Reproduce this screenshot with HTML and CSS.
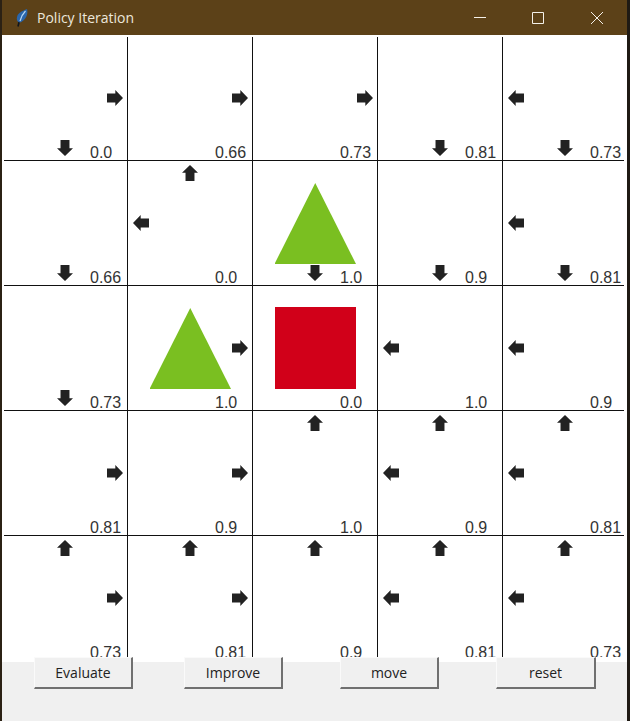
FILE: index.html
```html
<!DOCTYPE html>
<html lang="en">
<head>
    <meta charset="UTF-8">
    <title>Policy Iteration</title>
    <link rel="stylesheet" href="styles.css">
</head>
<body>
    <div class="titlebar">
        <svg class="feather" width="12" height="18" viewBox="0 0 12 18">
            <path d="M2 17.5 L3.2 12.5" stroke="#10161e" stroke-width="1.6" fill="none"/>
            <path d="M11 0 C12.5 5 9.5 11.5 4 13.5 C.5 13.5 0 9 1.8 5.8 C4 2.8 8 1 11 0 Z" fill="#2a66ab"/>
            <path d="M9.5 2 C7 4.5 5 8 4 12" stroke="#b5d8f4" stroke-width="1.2" fill="none"/>
        </svg>
        <span class="title">Policy Iteration</span>
        <div class="controls">
            <span class="control">
                <svg width="12" height="12" viewBox="0 0 12 12"><path d="M0 5.5H12" stroke="#f4f0e8" fill="none"/></svg>
            </span>
            <span class="control">
                <svg width="12" height="12" viewBox="0 0 12 12"><path d="M.5.5H11.5V11.5H.5Z" stroke="#f4f0e8" fill="none"/></svg>
            </span>
            <span class="control">
                <svg width="12" height="12" viewBox="0 0 12 12"><path d="M0 0L12 12M12 0L0 12" stroke="#f4f0e8" fill="none"/></svg>
            </span>
        </div>
    </div>

    <div class="canvas">
        <div class="board">
            <div class="row">
                <div class="cell"><span class="arrow right"></span><span class="arrow down"></span><span class="value">0.0</span></div>
                <div class="cell"><span class="arrow right"></span><span class="value">0.66</span></div>
                <div class="cell"><span class="arrow right"></span><span class="value">0.73</span></div>
                <div class="cell"><span class="arrow down"></span><span class="value">0.81</span></div>
                <div class="cell"><span class="arrow left"></span><span class="arrow down"></span><span class="value">0.73</span></div>
            </div>
            <div class="row">
                <div class="cell"><span class="arrow down"></span><span class="value">0.66</span></div>
                <div class="cell"><span class="arrow up"></span><span class="arrow left"></span><span class="value">0.0</span></div>
                <div class="cell"><span class="triangle"></span><span class="arrow down"></span><span class="value">1.0</span></div>
                <div class="cell"><span class="arrow down"></span><span class="value">0.9</span></div>
                <div class="cell"><span class="arrow left"></span><span class="arrow down"></span><span class="value">0.81</span></div>
            </div>
            <div class="row">
                <div class="cell"><span class="arrow down"></span><span class="value">0.73</span></div>
                <div class="cell"><span class="triangle"></span><span class="arrow right"></span><span class="value">1.0</span></div>
                <div class="cell"><span class="square"></span><span class="value">0.0</span></div>
                <div class="cell"><span class="arrow left"></span><span class="value">1.0</span></div>
                <div class="cell"><span class="arrow left"></span><span class="value">0.9</span></div>
            </div>
            <div class="row">
                <div class="cell"><span class="arrow right"></span><span class="value">0.81</span></div>
                <div class="cell"><span class="arrow right"></span><span class="value">0.9</span></div>
                <div class="cell"><span class="arrow up"></span><span class="value">1.0</span></div>
                <div class="cell"><span class="arrow up"></span><span class="arrow left"></span><span class="value">0.9</span></div>
                <div class="cell"><span class="arrow up"></span><span class="arrow left"></span><span class="value">0.81</span></div>
            </div>
            <div class="row">
                <div class="cell"><span class="arrow up"></span><span class="arrow right"></span><span class="value">0.73</span></div>
                <div class="cell"><span class="arrow up"></span><span class="arrow right"></span><span class="value">0.81</span></div>
                <div class="cell"><span class="arrow up"></span><span class="value">0.9</span></div>
                <div class="cell"><span class="arrow up"></span><span class="arrow left"></span><span class="value">0.81</span></div>
                <div class="cell"><span class="arrow up"></span><span class="arrow left"></span><span class="value">0.73</span></div>
            </div>
        </div>
    </div>

    <div class="toolbar">
        <button class="btn">Evaluate</button>
        <button class="btn">Improve</button>
        <button class="btn">move</button>
        <button class="btn btn-last">reset</button>
    </div>
</body>
</html>
```

FILE: styles.css
```css
* {
    box-sizing: border-box;
}

body {
    margin: 0;
    width: 630px;
    height: 721px;
    overflow: hidden;
    background-color: #f0f0f0;
    border-left: 2px solid #2b2114;
    border-right: 3px solid #1f1a14;
}

.titlebar {
    display: flex;
    align-items: center;
    height: 35px;
    margin: 0 -3px 0 -2px;
    padding-left: 16px;
    background-color: #5c4118;
    color: #ece7dc;
    font-family: "Open Sans", sans-serif;
    font-size: 14px;
}

.feather {
    flex: none;
}

.title {
    margin-left: 9px;
}

.controls {
    display: flex;
    margin-left: auto;
    padding-right: 4px;
}

.control {
    display: flex;
    justify-content: center;
    align-items: center;
    width: 58.5px;
    height: 32px;
}

.canvas {
    padding-bottom: 5px;
    background-color: white;
}

.board {
    height: 622px;
    padding-top: 2px;
    overflow: hidden;
}

.row {
    display: flex;
    width: 620px;
    height: 125px;
    margin-left: 2px;
    border-bottom: 1px solid #111;
}

.row:first-child {
    height: 124px;
}

.cell {
    position: relative;
    flex: none;
    width: 125px;
    border-right: 1px solid #111;
}

.cell:first-child {
    margin-left: -1px;
}

.cell:last-child {
    border-right: none;
}

.arrow {
    position: absolute;
    width: 16px;
    height: 16px;
    background-color: #222;
    clip-path: polygon(0 22%, 52% 22%, 52% 0, 100% 50%, 52% 100%, 52% 78%, 0 78%);
}

.arrow.right {
    left: 104px;
    bottom: 54px;
}

.arrow.left {
    left: 5px;
    bottom: 54px;
    transform: rotate(180deg);
}

.arrow.up {
    left: 54px;
    bottom: 104px;
    transform: rotate(-90deg);
}

.arrow.down {
    left: 54px;
    bottom: 4px;
    transform: rotate(90deg);
}

.value {
    position: absolute;
    left: 87px;
    bottom: -1px;
    color: #333;
    font-family: "Liberation Sans", Arial, sans-serif;
    font-size: 16px;
    line-height: 16px;
}

.triangle {
    position: absolute;
    left: 21.5px;
    bottom: 21px;
    width: 81.5px;
    height: 81px;
    background-color: #7abf21;
    clip-path: polygon(50% 0, 100% 100%, 0 100%);
}

.square {
    position: absolute;
    left: 21.5px;
    bottom: 21px;
    width: 81.5px;
    height: 82px;
    background-color: #d10019;
}

.toolbar {
    display: flex;
    align-items: flex-start;
    gap: 57px;
    height: 59px;
    padding-left: 32px;
}

.btn {
    width: 99px;
    height: 32px;
    margin-top: -5px;
    padding: 0;
    background-color: #f0f0f0;
    border-style: solid;
    border-width: 1px 2px 2px 1px;
    border-color: #fafafa #707070 #707070 #fafafa;
    color: #222;
    font-family: "Open Sans", sans-serif;
    font-size: 14px;
}

.btn:first-child {
    margin-right: -6px;
}

.btn-last {
    width: 100px;
}
```
